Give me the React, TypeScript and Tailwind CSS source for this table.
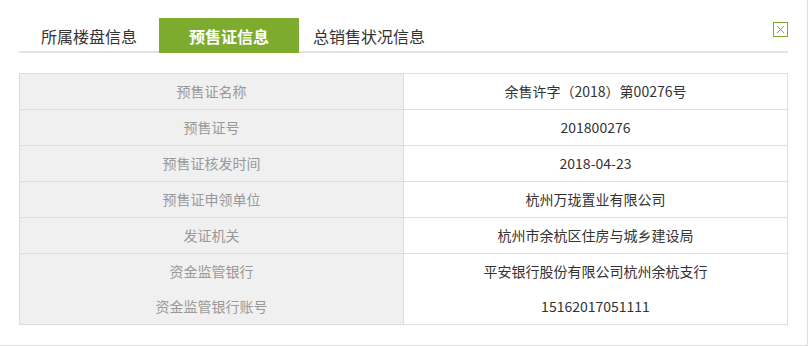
const rows: { label: string; value: string; divider: boolean }[] = [
  { label: '预售证名称', value: '余售许字（2018）第00276号', divider: true },
  { label: '预售证号', value: '201800276', divider: true },
  { label: '预售证核发时间', value: '2018-04-23', divider: true },
  { label: '预售证申领单位', value: '杭州万珑置业有限公司', divider: true },
  { label: '发证机关', value: '杭州市余杭区住房与城乡建设局', divider: true },
  { label: '资金监管银行', value: '平安银行股份有限公司杭州余杭支行', divider: false },
  { label: '资金监管银行账号', value: '15162017051111', divider: false },
];

const tabs = ['所属楼盘信息', '预售证信息', '总销售状况信息'];

export default function App() {
  return (
    <div
      className="w-[808px] h-[346px] bg-white border-r border-b border-[#dedede] pl-[19px] pr-[19px] pt-[18px]"
      style={{ fontFamily: '"Noto Sans CJK SC", "Noto Sans", sans-serif' }}
    >
      {/* Tabs */}
      <div className="flex items-end justify-between h-[35px] border-b-2 border-[#e2e2e2]">
        <div className="flex h-full">
          {tabs.map((t, i) => (
            <div
              key={t}
              className={
                i === 1
                  ? 'w-[140px] h-[35px] flex items-center justify-center bg-[#7dab2e] text-white font-bold text-[16px]'
                  : 'w-[140px] h-[35px] flex items-center justify-center text-[#333] text-[16px]'
              }
            >
              {t}
            </div>
          ))}
        </div>
        <div className="self-start mt-[4px] w-[15px] h-[15px] border-[1.5px] border-[#7dab2e] flex items-center justify-center">
          <svg width="9" height="9" viewBox="0 0 9 9">
            <path d="M1 1 L8 8 M8 1 L1 8" stroke="#7dab2e" strokeWidth="1" fill="none" />
          </svg>
        </div>
      </div>

      {/* Table */}
      <div className="mt-[20px] border border-[#dddddd] text-[14px]">
        {rows.map((r, i) => (
          <div
            key={r.label}
            className={
              i > 0 && rows[i - 1].divider
                ? 'flex h-[36px] border-t border-[#dddddd]'
                : 'flex h-[35px]'
            }
          >
            <div className="w-[384px] bg-[#f0f0f0] border-r border-[#dddddd] flex items-center justify-center text-[#999]">
              {r.label}
            </div>
            <div className="flex-1 flex items-center justify-center text-[#333]">{r.value}</div>
          </div>
        ))}
      </div>
    </div>
  );
}
